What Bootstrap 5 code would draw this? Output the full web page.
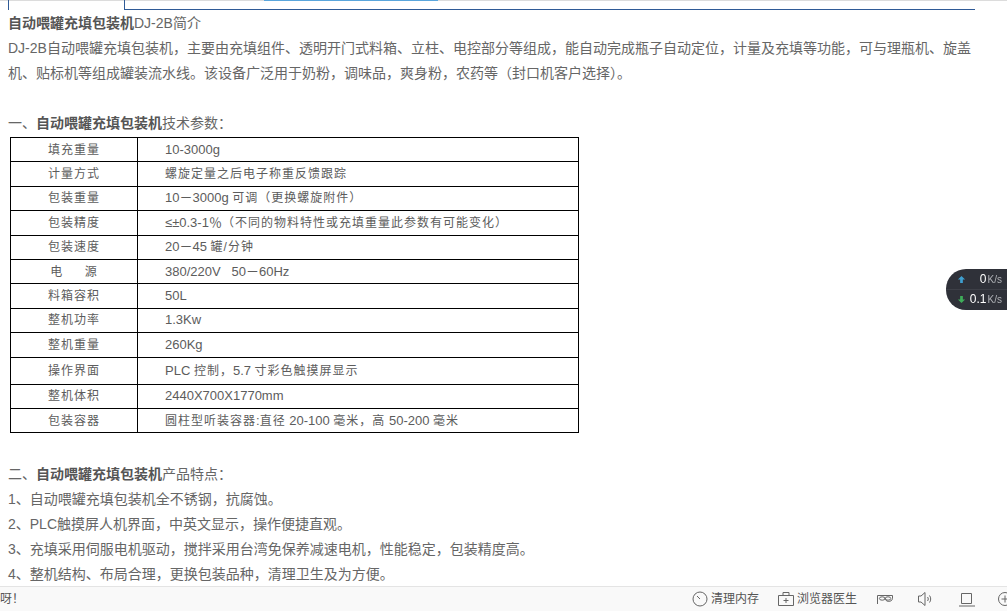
<!DOCTYPE html>
<html lang="zh-CN">
<head>
<meta charset="utf-8">
<title>自动喂罐充填包装机</title>
<link rel="stylesheet" href="https://cdn.jsdelivr.net/npm/bootstrap@5.3.0/dist/css/bootstrap.min.css">
<style>
html,body{height:611px;overflow:hidden;background:#fff}
body{font:14px/25px "Liberation Sans","Noto Sans CJK SC",sans-serif;color:#666}
.topshade{height:1px;background:#dcdcdc}
.topblue{width:174px;height:1px;margin-left:264px;background:#5aa6dc}
.tabstrip{height:10px;margin-left:8px;margin-right:32px;display:flex;margin-top:-1px;position:relative}
.tabon{width:117px;border-left:1px solid #2f5a96;border-right:1px solid #2f5a96}
.tabrest{flex:1;border-bottom:1px solid #2f5a96}
.article{padding:0 8px;margin-top:1px}
.article p{margin:0;height:25px;white-space:nowrap}
.article p.wrap{height:auto;white-space:normal;width:975px}
.article strong{font-weight:700;color:#555}
.spec{width:569px;margin:1px 0 29px 2px;border-collapse:collapse;table-layout:fixed;font-size:12px;line-height:18px;color:#5c5c5c}
.spec td{border:1px solid #000;padding:0;height:24.4px;vertical-align:middle;white-space:nowrap;letter-spacing:1px}
.spec td:first-child{width:127px;text-align:center}
.spec td:last-child{padding-left:27px}
.spec tr.tallrow td{height:27px;padding-top:1px}
.latin{font-size:13px;letter-spacing:0}
.speedbox{position:fixed;right:0;top:269px;width:61px;height:41px;background:#2f3139;border-radius:20px 0 0 20px;color:#fff;font-size:12px;line-height:20px}
.speedrow{display:flex;align-items:center;height:20px;padding-left:11px}
.speedrow+.speedrow{border-top:1px solid #3d3f47}
.speedval{margin-left:auto;padding-right:5px;white-space:nowrap}
.speedval small{font-size:10px;color:#aeb0b5;margin-left:1px}
.statusbar{position:fixed;left:0;right:0;bottom:0;height:25px;background:#f9f9f9;border-top:1px solid #e4e4e4;font-size:12px;line-height:24px;color:#555}
.statusitems svg{display:block;fill:none;stroke:#666;stroke-width:1}
.statusitems{margin-right:-6px}
.statuslabel{margin-left:3px}
.gapa{margin-left:19px}
.gapb{margin-left:20px}
.gapc{margin-left:24px}
.gapd{margin-left:26px}
.gape{margin-left:22px}
</style>
</head>
<body>
<div class="topshade"><div class="topblue"></div></div>
<div class="tabstrip"><div class="tabon"></div><div class="tabrest"></div></div>
<div class="article">
<p><strong>自动喂罐充填包装机</strong>DJ-2B简介</p>
<p class="wrap">DJ-2B自动喂罐充填包装机，主要由充填组件、透明开门式料箱、立柱、电控部分等组成，能自动完成瓶子自动定位，计量及充填等功能，可与理瓶机、旋盖机、贴标机等组成罐装流水线。该设备广泛用于奶粉，调味品，爽身粉，农药等（封口机客户选择）。</p>
<p></p>
<p>一、<strong>自动喂罐充填包装机</strong>技术参数：</p>
<table class="spec">
<tr><td>填充重量</td><td><span class="latin">10-3000g</span></td></tr>
<tr><td>计量方式</td><td>螺旋定量之后电子称重反馈跟踪</td></tr>
<tr><td>包装重量</td><td><span class="latin">10－3000g </span>可调（更换螺旋附件）</td></tr>
<tr><td>包装精度</td><td><span class="latin">≤±0.3-1％</span>（不同的物料特性或充填重量此参数有可能变化）</td></tr>
<tr><td>包装速度</td><td><span class="latin">20－45 </span>罐/分钟</td></tr>
<tr><td>电&nbsp;&nbsp;&nbsp;&nbsp;&nbsp;源</td><td><span class="latin">380/220V&nbsp;&nbsp; 50－60Hz</span></td></tr>
<tr><td>料箱容积</td><td><span class="latin">50L</span></td></tr>
<tr><td>整机功率</td><td><span class="latin">1.3Kw</span></td></tr>
<tr><td>整机重量</td><td><span class="latin">260Kg</span></td></tr>
<tr class="tallrow"><td>操作界面</td><td><span class="latin">PLC </span>控制，<span class="latin">5.7 </span>寸彩色触摸屏显示</td></tr>
<tr><td>整机体积</td><td><span class="latin">2440X700X1770mm</span></td></tr>
<tr><td>包装容器</td><td>圆柱型听装容器<span class="latin">:</span>直径<span class="latin"> 20-100 </span>毫米，高<span class="latin"> 50-200 </span>毫米</td></tr>
</table>
<p>二、<strong>自动喂罐充填包装机</strong>产品特点：</p>
<p>1、自动喂罐充填包装机全不锈钢，抗腐蚀。</p>
<p>2、PLC触摸屏人机界面，中英文显示，操作便捷直观。</p>
<p>3、充填采用伺服电机驱动，搅拌采用台湾免保养减速电机，性能稳定，包装精度高。</p>
<p>4、整机结构、布局合理，更换包装品种，清理卫生及为方便。</p>
</div>
<div class="speedbox">
<div class="speedrow"><svg width="9" height="9" viewBox="0 0 10 10"><path d="M5 1 9 5H6.500V9h-3V5H1z" fill="#3f9fd0"/></svg><span class="speedval">0<small>K/s</small></span></div>
<div class="speedrow"><svg width="9" height="9" viewBox="0 0 10 10"><path d="M5 9 1 5h2.500V1h3v4H9z" fill="#3fae5a"/></svg><span class="speedval">0.1<small>K/s</small></span></div>
</div>
<div class="statusbar d-flex align-items-center">
<span>呀！</span>
<div class="statusitems d-flex align-items-center ms-auto">
<svg width="16" height="16" viewBox="0 0 16 16"><circle cx="8" cy="8" r="7"/><path d="M5 5 8 8"/></svg>
<span class="statuslabel">清理内存</span>
<svg class="gapa" width="16" height="14" viewBox="0 0 16 14"><path d="M.5 3.500h15v10H.5zM5 3.500V.5h6v3M8 6v5M5.500 8.500h5"/></svg>
<span class="statuslabel">浏览器医生</span>
<svg class="gapb" width="16" height="11" viewBox="0 0 16 11"><path d="M.5 10V1.500h15v3c0 2-2.500 3-4 3S8 6 8 4"/><ellipse cx="5.200" cy="4.500" rx="2.800" ry="1.700"/><ellipse cx="11" cy="4.500" rx="2.800" ry="1.700"/></svg>
<svg class="gapc" width="16" height="16" viewBox="0 0 16 16"><path d="M1.500 5H4l4-3.500v13L4 11H1.500zM10.500 6c1 1.200 1 2.800 0 4M12.500 4.500c1.600 2 1.600 5 0 7"/></svg>
<svg class="gapd" width="16" height="15" viewBox="0 0 16 15"><path d="M2.500 1.500h10v10h-10zM0 14h16"/></svg>
<svg class="gape" width="16" height="16" viewBox="0 0 16 16"><circle cx="8" cy="8" r="6.500"/><path d="M8 4.500v7M4.500 8h7"/></svg>
</div>
</div>
</body>
</html>
